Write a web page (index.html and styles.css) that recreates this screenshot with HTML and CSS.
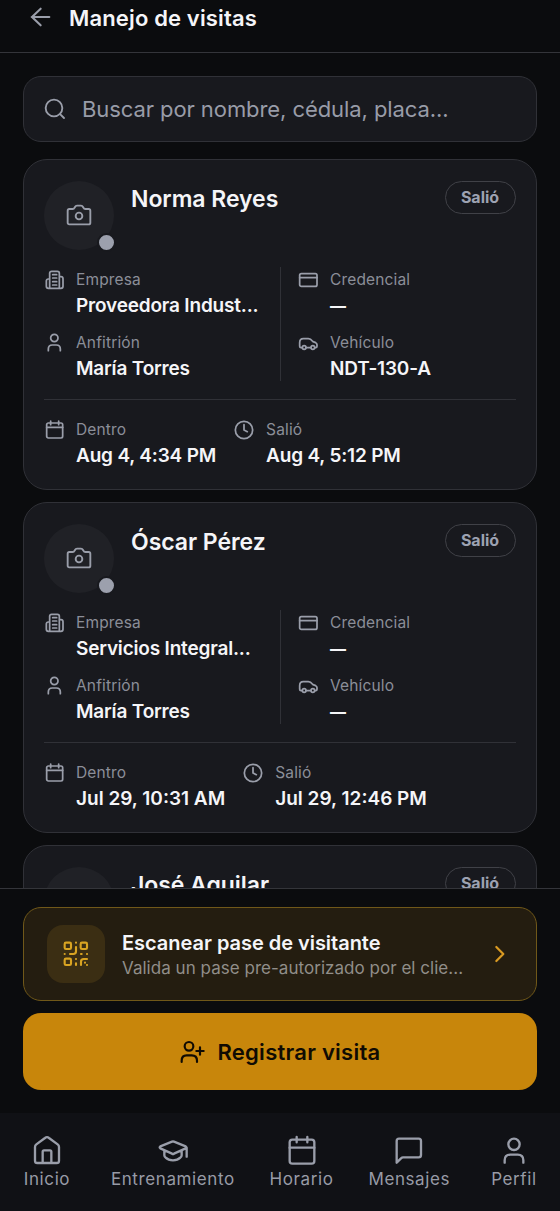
FILE: index.html
```html
<!DOCTYPE html>
<html lang="es">
<head>
<meta charset="utf-8">
<title>Manejo de visitas</title>
<link rel="stylesheet" href="styles.css">
</head>
<body>
<svg class="sprite" aria-hidden="true">
  <symbol id="camera" viewBox="0 0 78 66"><path d="M10 15h10q4 0 6-4l1-2q2-4 6-4h12q4 0 6 4l1 2q2 4 6 4h10q5 0 5 5v36q0 5-5 5H10q-5 0-5-5V20q0-5 5-5z"/><circle cx="39" cy="36" r="10"/></symbol>
  <symbol id="building" viewBox="0 0 60 60"><path d="M17 55V10q0-6 6-6h17q6 0 6 6v45M17 27h-4q-6 0-6 6v16q0 6 6 6h38q6 0 6-6V26q0-6-6-6h-5M26 14h12M26 24h12M26 35h12M26 45h12"/></symbol>
  <symbol id="user" viewBox="0 0 60 60"><circle cx="31" cy="15" r="11"/><path d="M13 53v-5q0-12 12-12h12q12 0 12 12v5"/></symbol>
  <symbol id="calendar" viewBox="0 0 60 60"><rect x="8" y="9" width="48" height="45" rx="5"/><path d="M8 22h48M20 3v11M44 3v11"/></symbol>
  <symbol id="clock" viewBox="0 0 60 60"><circle cx="30" cy="30" r="26"/><path d="M30 14v16l10 5"/></symbol>
  <symbol id="card" viewBox="0 0 60 60"><rect x="5" y="11" width="52" height="38" rx="5"/><path d="M5 23h52"/></symbol>
  <symbol id="car" viewBox="0 0 60 60"><path d="M13 44H9q-4 0-4-4V29q0-12 11-12h15q7 0 12 7l2 2 8 3q4 2 4 6v5q0 4-4 4h-2M24 44h14"/><circle cx="18.500" cy="43.500" r="5.500"/><circle cx="44.500" cy="43.500" r="5.500"/></symbol>
</svg>

<header class="topbar">
  <svg class="icon back" viewBox="0 0 66 66"><path d="M5 33h53M32 8 6 33l26 25"/></svg>
  <h1>Manejo de visitas</h1>
</header>

<main class="list">
  <div class="search">
    <svg class="icon search-icon" viewBox="0 0 66 66"><circle cx="30" cy="30" r="25"/><path d="m49 49 11 11"/></svg>
    <span>Buscar por nombre, cédula, placa...</span>
  </div>

  <article class="visit">
    <div class="head">
      <div class="avatar"><svg class="icon camera"><use href="#camera"/></svg><i class="status"></i></div>
      <h2>Norma Reyes</h2>
      <span class="badge">Salió</span>
    </div>
    <div class="details">
      <div class="col">
        <div class="field"><svg class="icon"><use href="#building"/></svg><div><small>Empresa</small><b>Proveedora Indust...</b></div></div>
        <div class="field"><svg class="icon"><use href="#user"/></svg><div><small>Anfitrión</small><b>María Torres</b></div></div>
      </div>
      <div class="col second">
        <div class="field"><svg class="icon"><use href="#card"/></svg><div><small>Credencial</small><b class="empty">—</b></div></div>
        <div class="field"><svg class="icon"><use href="#car"/></svg><div><small>Vehículo</small><b>NDT-130-A</b></div></div>
      </div>
    </div>
    <div class="times">
      <div class="field"><svg class="icon"><use href="#calendar"/></svg><div><small>Dentro</small><b>Aug 4, 4:34 PM</b></div></div>
      <div class="field"><svg class="icon"><use href="#clock"/></svg><div><small>Salió</small><b>Aug 4, 5:12 PM</b></div></div>
    </div>
  </article>

  <article class="visit">
    <div class="head">
      <div class="avatar"><svg class="icon camera"><use href="#camera"/></svg><i class="status"></i></div>
      <h2>Óscar Pérez</h2>
      <span class="badge">Salió</span>
    </div>
    <div class="details">
      <div class="col">
        <div class="field"><svg class="icon"><use href="#building"/></svg><div><small>Empresa</small><b>Servicios Integral...</b></div></div>
        <div class="field"><svg class="icon"><use href="#user"/></svg><div><small>Anfitrión</small><b>María Torres</b></div></div>
      </div>
      <div class="col second">
        <div class="field"><svg class="icon"><use href="#card"/></svg><div><small>Credencial</small><b class="empty">—</b></div></div>
        <div class="field"><svg class="icon"><use href="#car"/></svg><div><small>Vehículo</small><b class="empty">—</b></div></div>
      </div>
    </div>
    <div class="times wide">
      <div class="field"><svg class="icon"><use href="#calendar"/></svg><div><small>Dentro</small><b>Jul 29, 10:31 AM</b></div></div>
      <div class="field"><svg class="icon"><use href="#clock"/></svg><div><small>Salió</small><b>Jul 29, 12:46 PM</b></div></div>
    </div>
  </article>

  <article class="visit">
    <div class="head">
      <div class="avatar"></div>
      <h2>José Aguilar</h2>
      <span class="badge">Salió</span>
    </div>
  </article>
</main>

<section class="actions">
  <div class="scan">
    <div class="qr"><svg class="icon" viewBox="0 0 78 78"><rect x="5" y="5" width="19" height="19" rx="4"/><rect x="53" y="5" width="19" height="19" rx="4"/><rect x="5" y="53" width="19" height="19" rx="4"/><path d="M39 5v.1M39 18v13q0 8-8 8H21M5 39h.1M54 39h2M72 39h.1M39 54v.1M39 67v5M54 72V62q0-8 8-8h10M66 65v.1M72 72v.1"/></svg></div>
    <div class="scan-text"><strong>Escanear pase de visitante</strong><span>Valida un pase pre-autorizado por el clie...</span></div>
    <svg class="icon chevron" viewBox="0 0 36 54"><path d="m7 6 21 21L7 48"/></svg>
  </div>
  <div class="register">
    <svg class="icon" viewBox="0 0 78 78"><circle cx="27" cy="22" r="13"/><path d="M5 69v-4q0-16 15-16h15q16 0 16 16v4M60 25v22M49 36h22"/></svg>
    <span>Registrar visita</span>
  </div>
</section>

<nav class="tabs">
  <div class="tab"><svg class="icon" viewBox="0 0 90 90"><path d="M9 36q0-5 4-8l26-19q6-5 12 0l26 19q4 3 4 8v41q0 7-7 7H16q-7 0-7-7zM32 84V50q0-4 4-4h18q4 0 4 4v34"/></svg><span>Inicio</span></div>
  <div class="tab"><svg class="icon" viewBox="0 0 90 90"><path d="m42 20-35 14q-4 3 0 6l35 16q3 2 6 0l35-16q4-3 0-6L48 20q-3-1-6 0zM86 38v27M19 47v14q0 4 4 7 8 8 22 8t22-8q4-3 4-7V47"/></svg><span>Entrenamiento</span></div>
  <div class="tab"><svg class="icon" viewBox="0 0 90 90"><rect x="8" y="14" width="74" height="72" rx="8"/><path d="M8 38h74M29 6v16M61 6v16"/></svg><span>Horario</span></div>
  <div class="tab"><svg class="icon" viewBox="0 0 90 90"><path d="M8 83V18q0-7 7-7h59q7 0 7 7v42q0 7-7 7H27q-3 0-6 3z"/></svg><span>Mensajes</span></div>
  <div class="tab"><svg class="icon" viewBox="0 0 90 90"><circle cx="45" cy="28" r="17"/><path d="M17 83v-7q0-17 17-17h22q17 0 17 17v7"/></svg><span>Perfil</span></div>
</nav>
</body>
</html>
```
FILE: styles.css
```css
* { box-sizing: border-box; }
body {
  margin: 0;
  width: 560px;
  height: 1211px;
  overflow: hidden;
  display: flex;
  flex-direction: column;
  background: #0b0c0e;
  color: #f5f5f8;
  font-family: Inter, "Liberation Sans", sans-serif;
}
h1, h2 { margin: 0; font-weight: 600; white-space: nowrap; }
.sprite { display: none; }
.icon {
  display: block;
  flex: none;
  width: 20px;
  height: 20px;
  fill: none;
  stroke: #9a9eaa;
  stroke-width: 5.2;
  stroke-linecap: round;
  stroke-linejoin: round;
}

.topbar {
  flex: none;
  height: 53px;
  padding: 0 30px 18px;
  display: flex;
  align-items: center;
  gap: 17px;
  border-bottom: 1px solid #34353a;
}
.back { width: 22px; height: 22px; stroke-width: 6.2; }
h1 { padding-top: 1px; font-size: 22px; letter-spacing: .15px; }

.list {
  flex: none;
  height: 835px;
  padding: 23px 23px 0;
  overflow: hidden;
}
.search {
  height: 66px;
  margin-bottom: 17px;
  padding-left: 20px;
  display: flex;
  align-items: center;
  gap: 16px;
  border: 1px solid #303137;
  border-radius: 18px;
  background: #18191e;
  color: #989ca8;
  font-size: 22px;
  letter-spacing: -.08px;
  white-space: nowrap;
}
.search-icon { width: 22px; height: 22px; stroke-width: 5.6; }

.visit {
  height: 331px;
  margin-bottom: 12px;
  padding: 21px 20.5px 19px 20px;
  border: 1px solid #303137;
  border-radius: 24px;
  background: #18191e;
}
.head { display: flex; height: 86px; }
.avatar {
  position: relative;
  flex: none;
  width: 70px;
  height: 69px;
  display: grid;
  place-items: center;
  border-radius: 50%;
  background: #202126;
}
.camera { width: 26px; height: 22px; margin-bottom: 1px; stroke-width: 5.6; }
.status {
  position: absolute;
  right: -2px;
  bottom: -2px;
  width: 19px;
  height: 19px;
  border: 2px solid #18191e;
  border-radius: 50%;
  background: #9ca0ad;
}
h2 { margin: 4px auto 0 17px; font-size: 23px; line-height: 28px; letter-spacing: -.05px; }
.badge {
  width: 71px;
  height: 33px;
  border: 1px solid #404147;
  border-radius: 17px;
  color: #9da2b2;
  font-size: 16px;
  font-weight: 700;
  line-height: 31px;
  text-align: center;
}
.details { display: flex; height: 114px; }
.col { flex: none; width: 236px; display: flex; flex-direction: column; gap: 11px; }
.second { padding-left: 17px; border-left: 1px solid #303137; }
.field { display: flex; gap: 12px; height: 52px; white-space: nowrap; }
.field .icon { margin-top: 3px; }
small { display: block; color: #8b8e98; font-size: 15.5px; line-height: 25px; letter-spacing: .15px; }
b { display: block; font-size: 19px; font-weight: 600; line-height: 28px; letter-spacing: -.18px; }
.empty { font-size: 16px; font-weight: 800; }
.times {
  display: flex;
  gap: 18px;
  margin-top: 18px;
  padding-top: 17px;
  border-top: 1px solid #303137;
}
.wide b { letter-spacing: 0; }

.actions {
  flex: none;
  height: 225px;
  padding: 18px 23px 0;
  border-top: 1px solid #34353a;
}
.scan {
  height: 94px;
  display: flex;
  align-items: center;
  padding: 0 30px 0 23px;
  border: 1px solid #705819;
  border-radius: 18px;
  background: #241d10;
}
.qr {
  width: 58px;
  height: 58px;
  display: grid;
  place-items: center;
  border-radius: 16px;
  background: #3b2e13;
}
.qr .icon { width: 26px; height: 26px; stroke: #d9a422; stroke-width: 6.4; }
.scan-text { flex: 1; min-width: 0; margin-left: 17px; padding-top: 2px; white-space: nowrap; }
.scan-text strong { display: block; font-size: 20px; font-weight: 600; line-height: 26px; letter-spacing: -.03px; }
.scan-text span { display: block; color: #918e89; font-size: 17px; line-height: 25px; letter-spacing: .03px; }
.chevron { width: 12px; height: 18px; stroke: #d99a22; stroke-width: 6.6; }
.register {
  height: 77px;
  margin-top: 12px;
  display: flex;
  align-items: center;
  justify-content: center;
  gap: 12px;
  border-radius: 18px;
  background: #c8860b;
  color: #100b03;
  font-size: 22px;
  font-weight: 600;
  letter-spacing: .25px;
  white-space: nowrap;
}
.register .icon { width: 26px; height: 26px; stroke: #100b03; stroke-width: 6.5; }

.tabs {
  flex: none;
  height: 98px;
  padding: 22px 17px 0 18px;
  display: flex;
  justify-content: space-between;
  background: #101115;
}
.tab {
  min-width: 58px;
  display: flex;
  flex-direction: column;
  align-items: center;
  color: #989ba6;
  font-size: 17px;
  line-height: 29px;
  letter-spacing: .6px;
}
.tab .icon { width: 30px; height: 30px; stroke-width: 7; }
```
